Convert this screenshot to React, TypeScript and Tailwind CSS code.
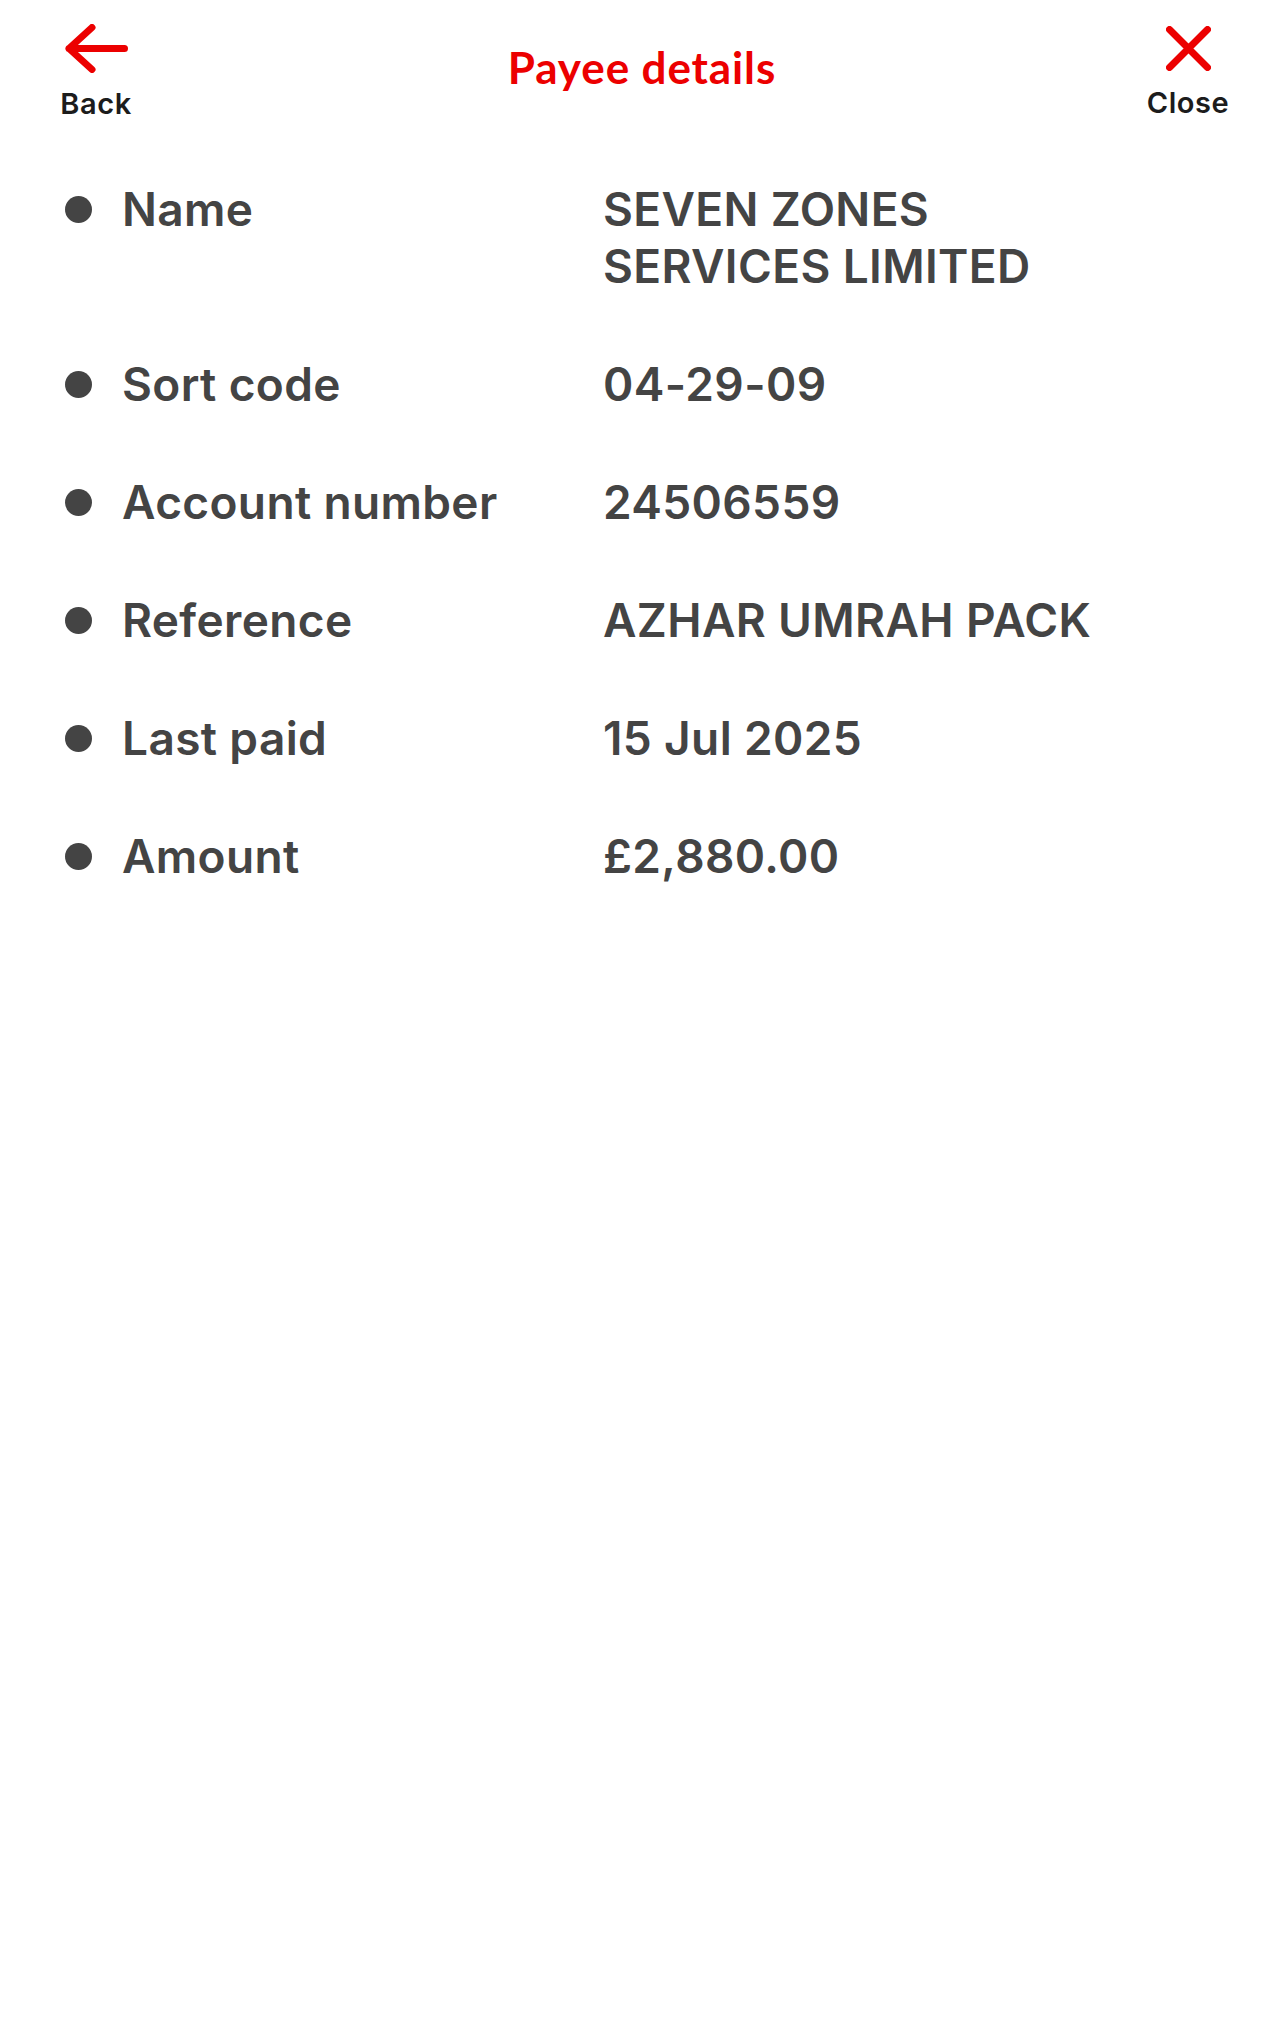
const rows: { label: string; value: string[] }[] = [
  { label: "Name", value: ["SEVEN ZONES", "SERVICES LIMITED"] },
  { label: "Sort code", value: ["04-29-09"] },
  { label: "Account number", value: ["24506559"] },
  { label: "Reference", value: ["AZHAR UMRAH PACK"] },
  { label: "Last paid", value: ["15 Jul 2025"] },
  { label: "Amount", value: ["£2,880.00"] },
];

function BackArrow() {
  return (
    <svg width="63" height="49" viewBox="0 0 63 49" fill="none">
      <path
        d="M59.5 24.5H4M27 3.5L4 24.5L27 45.5"
        stroke="#ec0000"
        strokeWidth="7"
        strokeLinecap="round"
        strokeLinejoin="round"
      />
    </svg>
  );
}

function CloseX() {
  return (
    <svg width="45" height="45" viewBox="0 0 45 45" fill="none">
      <path
        d="M3.5 3.5L41.5 41.5M41.5 3.5L3.5 41.5"
        stroke="#ec0000"
        strokeWidth="7"
        strokeLinecap="round"
      />
    </svg>
  );
}

export default function App() {
  return (
    <div className="min-h-screen bg-white font-['Inter',sans-serif]">
      {/* top bar */}
      <header className="flex items-start justify-between pl-[36px] pr-[36px] pt-[24px]">
        <button className="flex w-[120px] flex-col items-center">
          <BackArrow />
          <span className="mt-[13px] text-[29px] leading-[36px] font-semibold tracking-[0.02em] text-[#1c1c1c]">
            Back
          </span>
        </button>
        <h1 className="mt-[17px] font-['Lato',sans-serif] text-[44px] leading-[52px] font-bold tracking-[0.02em] text-[#ec0000]">
          Payee details
        </h1>
        <button className="flex w-[120px] flex-col items-center pt-[2px]">
          <CloseX />
          <span className="mt-[14px] text-[29px] leading-[36px] font-semibold tracking-[0.02em] text-[#1c1c1c]">
            Close
          </span>
        </button>
      </header>

      {/* payee details list */}
      <ul className="mt-[59px] flex flex-col gap-[61px] pl-[65px] pr-[40px] text-[46px] leading-[57px] font-semibold tracking-[0.008em] text-[#444444]">
        {rows.map((row) => (
          <li key={row.label} className="flex items-start">
            <div className="flex w-[57px] shrink-0 pt-[15px]">
              <span className="h-[27px] w-[27px] rounded-full bg-[#444444]" />
            </div>
            <div className="w-[481px] shrink-0">{row.label}</div>
            <div className="flex flex-col">
              {row.value.map((line) => (
                <span key={line}>{line}</span>
              ))}
            </div>
          </li>
        ))}
      </ul>
    </div>
  );
}
